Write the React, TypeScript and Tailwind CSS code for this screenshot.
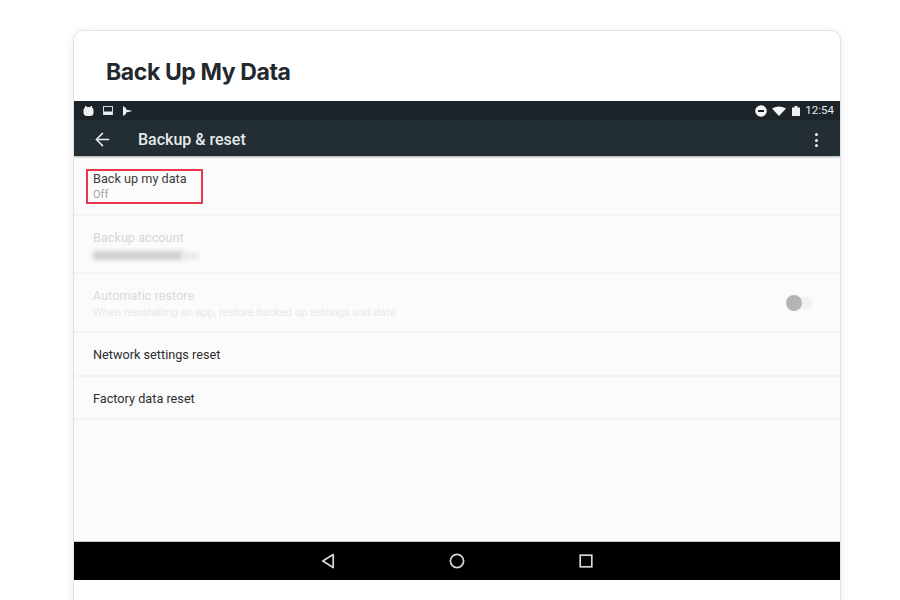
import { ArrowLeft } from 'lucide-react';

function StatusBar() {
  return (
    <div className="flex h-[19px] items-center justify-between bg-[#1c2429] pl-[9px] pr-[6px]">
      <div className="flex items-center gap-[9px]">
        <svg width="11" height="10" viewBox="0 0 11 10" fill="#eceff1">
          <rect x="0.5" y="1" width="10" height="9" rx="3.5" />
          <rect x="2" y="0" width="1.5" height="2.5" />
          <rect x="7.5" y="0" width="1.5" height="2.5" />
        </svg>
        <svg width="10" height="9" viewBox="0 0 10 9">
          <rect x="0.5" y="0.5" width="9" height="8" fill="none" stroke="#d5d9db" />
          <rect x="1" y="5.5" width="8" height="3" fill="#eceff1" />
        </svg>
        <svg width="11" height="10" viewBox="0 0 11 10" fill="#eceff1">
          <path d="M1 0 L1 10 L4 8 L4 6.5 L10.5 5 L4 3.5 L4 2 Z" />
        </svg>
      </div>
      <div className="flex items-center">
        <svg width="12" height="12" viewBox="0 0 12 12" className="mr-[5px]">
          <circle cx="6" cy="6" r="5.8" fill="#f5f5f5" />
          <rect x="3" y="5" width="6" height="2" fill="#1c2429" />
        </svg>
        <svg width="14" height="10" viewBox="0 0 14 10" fill="#f5f5f5" className="mr-[6px]">
          <path d="M0 2.5 Q7 -1.5 14 2.5 L7 10 Z" />
        </svg>
        <svg width="8" height="10" viewBox="0 0 8 10" fill="#eceff1" className="mr-[5px]">
          <path d="M0 1.5 L2.5 1.5 L2.5 0 L5.5 0 L5.5 1.5 L8 1.5 L8 10 L0 10 Z" />
        </svg>
        <span className="font-['Roboto',sans-serif] text-[11.5px] leading-none text-[#e8eaeb]">12:54</span>
      </div>
    </div>
  );
}

function Toolbar() {
  return (
    <div className="relative flex h-[36px] items-center bg-[#232e34] pl-[18px] pr-[22px] pt-[4px] shadow-[0_1px_2px_rgba(0,0,0,0.35)]">
      <ArrowLeft className="-mt-[2px] h-[21px] w-[21px] text-[#eceff1]" strokeWidth={1.7} />
      <span className="ml-[25px] font-['Roboto',sans-serif] text-[16px] font-medium text-[#e6e9ea]">Backup &amp; reset</span>
      <div className="ml-auto flex flex-col gap-[2.5px]">
        <div className="h-[3px] w-[3px] rounded-full bg-[#eceff1]" />
        <div className="h-[3px] w-[3px] rounded-full bg-[#eceff1]" />
        <div className="h-[3px] w-[3px] rounded-full bg-[#eceff1]" />
      </div>
    </div>
  );
}

function SettingsList() {
  return (
    <div className="flex h-[385px] flex-col bg-[#fbfbfb] font-['Roboto',sans-serif] text-[12.7px] leading-none">
      <div className="flex h-[60px] flex-col justify-center gap-[4px] border-b-2 border-[#f3f3f3] pl-[19px] pt-[3px]">
        <div className="relative">
          <span className="block text-[#3c3c3c]">Back up my data</span>
          <div className="absolute left-[-7px] top-[-4px] h-[35px] w-[117px] rounded-[1px] border-2 border-[#e8374f]" />
        </div>
        <span className="block text-[11px] text-[#a3a3a3]">Off</span>
      </div>

      <div className="flex h-[58px] flex-col justify-center gap-[6px] border-b-2 border-[#f3f3f3] pl-[19px] pt-[4px]">
        <span className="block text-[#d6d6d6]">Backup account</span>
        <div className="relative h-[9px] w-[108px]">
          <div className="h-[9px] w-[90px] bg-[#cfcfcf] blur-[2px]" />
          <div className="absolute left-[88px] top-[2px] h-[6px] w-[18px] bg-[#e8e8e8] blur-[2px]" />
        </div>
      </div>

      <div className="flex h-[59px] items-center justify-between border-b-2 border-[#f3f3f3] pl-[19px] pr-[27px] pt-[3px]">
        <div className="flex flex-col gap-[4px]">
          <span className="block text-[#dadada]">Automatic restore</span>
          <span className="block text-[11.1px] text-[#e8e8e8]">When reinstalling an app, restore backed up settings and data</span>
        </div>
        <div className="relative h-[12px] w-[26px] -translate-y-[1px] rounded-full bg-[#f1f1f1]">
          <div className="absolute left-[-1px] top-[-2px] h-[16px] w-[16px] rounded-full bg-[#b5b5b5]" />
        </div>
      </div>

      <div className="flex h-[44px] items-center border-b-2 border-[#f3f3f3] pl-[19px] pt-[2px] text-[#2e2e2e]">Network settings reset</div>
      <div className="flex h-[43px] items-center border-b-2 border-[#f3f3f3] pl-[19px] pt-[4px] text-[#2e2e2e]">Factory data reset</div>
    </div>
  );
}

function NavBar() {
  return (
    <div className="flex h-[39px] items-center justify-center gap-[114px] border-t border-[#c8c8c8] bg-black pr-[1px]">
      <svg width="14" height="16" viewBox="0 0 14 16" fill="none" stroke="#d8d8d8" strokeWidth="1.7">
        <path d="M12.2 1.5 L1.8 8 L12.2 14.5 Z" strokeLinejoin="round" />
      </svg>
      <svg width="16" height="16" viewBox="0 0 16 16" fill="none" stroke="#d8d8d8" strokeWidth="1.7">
        <circle cx="8" cy="8" r="6.6" />
      </svg>
      <svg width="14" height="14" viewBox="0 0 14 14" fill="none" stroke="#d8d8d8" strokeWidth="1.7">
        <rect x="1.2" y="1.2" width="11.6" height="11.6" />
      </svg>
    </div>
  );
}

export default function App() {
  return (
    <div className="h-[600px] w-[900px] overflow-hidden bg-white pl-[73px] pt-[30px]">
      <div className="h-[620px] w-[768px] overflow-hidden rounded-[10px] border border-[#e2e2e2] bg-white shadow-[0_1px_8px_rgba(0,0,0,0.08)]">
        <div className="flex h-[70px] items-center pl-[32px] pt-[12px]">
          <h1 className="font-['Inter',sans-serif] text-[23px] font-bold tracking-[-0.4px] text-[#23282d]">Back Up My Data</h1>
        </div>
        <StatusBar />
        <Toolbar />
        <SettingsList />
        <NavBar />
      </div>
    </div>
  );
}
